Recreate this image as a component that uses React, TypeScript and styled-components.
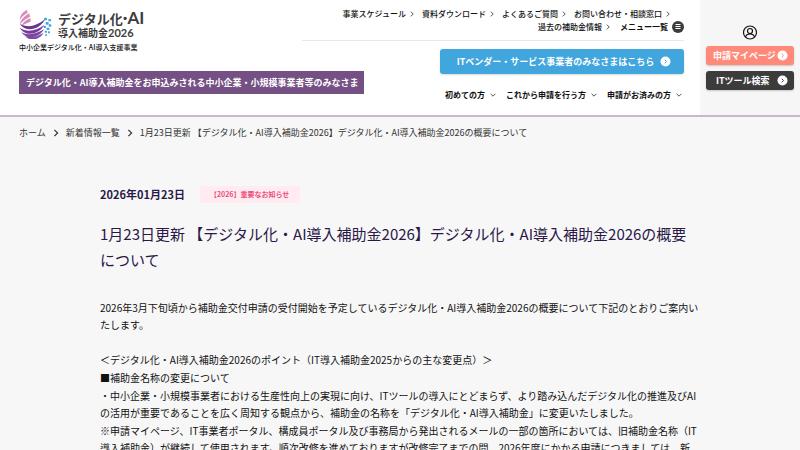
import React from "react";
import styled, { createGlobalStyle } from "styled-components";

const GlobalStyle = createGlobalStyle`
  *, *::before, *::after { box-sizing: border-box; }
  body {
    margin: 0;
    background: #f7f7f7;
    color: #111;
    font-family: "Noto Sans CJK JP", sans-serif;
    font-size: 10px;
    line-height: 17px;
  }
  a { color: inherit; text-decoration: none; }
  button { font: inherit; color: inherit; border: 0; background: none; padding: 0; cursor: pointer; }
  p, h1, ul, ol { margin: 0; padding: 0; }
  ul, ol { list-style: none; }
`;

const Header = styled.header`
  display: flex;
  background: #fff;
  border-bottom: 2px solid #c8b8cb;
`;

const Brand = styled.div`
  flex: none;
  padding: 8px 0 0 19px;
`;

const Logo = styled.a`
  display: flex;
  align-items: center;
  gap: 6px;
  height: 32px;
  color: #3c3c3c;
  font-weight: 700;
`;

const LogoMark = styled.svg`
  width: 33px;
  height: 30px;
`;

const LogoName = styled.span`
  display: block;
  font-size: 13px;
  line-height: 16px;
  white-space: nowrap;
`;

const LogoLatin = styled.span<{ $size: number }>`
  font-family: Lato, "Noto Sans CJK JP", sans-serif;
  font-size: ${(p) => p.$size}px;
  line-height: 10px;
`;

const LogoSub = styled.span`
  display: block;
  font-size: 10px;
  line-height: 11px;
  white-space: nowrap;
`;

const Tagline = styled.p`
  font-size: 7px;
  line-height: 12px;
  font-weight: 500;
  padding-top: 1px;
`;

const Audience = styled.p`
  margin-top: 18px;
  padding: 0 5px 0 7px;
  background: #755084;
  color: #fff;
  font-size: 9px;
  line-height: 23px;
  font-weight: 700;
  white-space: nowrap;
`;

const HeaderMain = styled.div`
  flex: 1;
  display: flex;
  flex-direction: column;
  align-items: flex-end;
  padding: 7px 16px 0 0;
  margin-left: -62px;
`;

const Utility = styled.nav`
  align-self: stretch;
  padding-bottom: 7px;
  border-bottom: 1px solid #e8e8e8;
  font-size: 8px;
  line-height: 13px;
  font-weight: 500;
`;

const UtilityRow = styled.ul<{ $end: number; $gap: number }>`
  display: flex;
  justify-content: flex-end;
  align-items: center;
  gap: ${(p) => p.$gap}px;
  height: 13px;
  padding-right: ${(p) => p.$end}px;
  white-space: nowrap;
`;

const ArrowLink = styled.a`
  display: flex;
  align-items: center;
  gap: 3px;
`;

const MenuButton = styled.button`
  display: flex;
  align-items: center;
  gap: 4px;
  font-weight: 700;
`;

const VendorLink = styled.a`
  display: flex;
  align-items: center;
  justify-content: center;
  gap: 6px;
  width: 244px;
  height: 25px;
  margin-top: 8px;
  padding-left: 4px;
  border-radius: 3px;
  background: #41a5de;
  box-shadow: 0 1px 2px rgba(0, 0, 0, 0.15);
  color: #fff;
  font-size: 9px;
  font-weight: 700;
`;

const GlobalNav = styled.ul`
  display: flex;
  gap: 10px;
  margin: 12px 2px 0 0;
  font-size: 8px;
  font-weight: 700;
  white-space: nowrap;
`;

const NavButton = styled.button`
  display: flex;
  align-items: center;
  gap: 5px;
`;

const Side = styled.div`
  flex: none;
  display: flex;
  flex-direction: column;
  align-items: stretch;
  gap: 6px;
  width: 100px;
  height: 115px;
  padding: 25px 6px 0;
  background: #f6f6f6;
`;

const UserIcon = styled.svg`
  align-self: center;
  width: 16px;
  height: 15px;
`;

const SideLink = styled.a<{ $color: string }>`
  display: flex;
  align-items: center;
  justify-content: space-between;
  height: 19px;
  padding: 0 6px 0 ${(p) => (p.$color === "#3c3c3c" ? 10 : 7)}px;
  border-radius: 3px;
  background: ${(p) => p.$color};
  box-shadow: 0 1px 2px rgba(0, 0, 0, 0.2);
  color: #fff;
  font-size: 9px;
  font-weight: 700;
  white-space: nowrap;
`;

const Breadcrumb = styled.ol`
  display: flex;
  align-items: center;
  gap: 6px;
  padding: 7px 19px;
  color: #333;
  font-size: 9px;
  white-space: nowrap;

  li { display: flex; align-items: center; gap: 6px; }
`;

const Article = styled.main`
  width: 75%;
  margin: 0 auto;
  padding-top: 38px;
`;

const Meta = styled.div`
  display: flex;
  align-items: center;
  gap: 15px;
  height: 17px;
  color: #2b1748;
`;

const PostDate = styled.time`
  font-size: 11px;
  font-weight: 700;
`;

const Tag = styled.span`
  padding: 0 11px 0 10px;
  background: #ffebf0;
  color: #ec4f80;
  font-size: 7px;
  line-height: 17px;
  font-weight: 700;
`;

const Title = styled.h1`
  margin-top: 18px;
  color: #2b1748;
  font-size: 15px;
  line-height: 26px;
  font-weight: 400;
`;

const Section = styled.section`
  display: flex;
  flex-direction: column;
  gap: 1px;
  margin-top: 18px;

  ${Title} + & { margin-top: 26px; }
`;

const Chevron = ({ size, width = 1, down = false }: { size: number; width?: number; down?: boolean }) => (
  <svg width={size} height={size} viewBox="0 0 10 10" fill="none" stroke="currentColor" strokeWidth={width} aria-hidden="true">
    <path d={down ? "M1 3l4 4 4-4" : "M3 1l4 4-4 4"} />
  </svg>
);

const CircleArrow = ({ color }: { color: string }) => (
  <svg width="11" height="11" viewBox="0 0 22 22" fill="none" aria-hidden="true">
    <circle cx="11" cy="11" r="10" fill="#fff" />
    <path d="M9.500 7.500l3.500 3.500-3.500 3.500" stroke={color} strokeWidth="2" />
  </svg>
);

const utilityLinks = ["事業スケジュール", "資料ダウンロード", "よくあるご質問", "お問い合わせ・相談窓口"];
const navItems = ["初めての方", "これから申請を行う方", "申請がお済みの方"];

const UtilityLink = ({ label }: { label: string }) => (
  <li>
    <ArrowLink href="#">
      {label}
      <Chevron size={6} width={1.2} />
    </ArrowLink>
  </li>
);

export default function App() {
  return (
    <>
      <GlobalStyle />
      <Header>
        <Brand>
          <Logo href="#">
            <LogoMark viewBox="0 0 99 90" fill="none" aria-hidden="true">
              <g fill="#d58bb8">
                <path d="M24 2C11 9 3 18 2 34c5-10 14-17 24-23z" />
                <path d="M31 13C15 22 6 30 3 46c8-11 19-17 30-23z" />
                <path d="M34 27C21 33 12 39 8 51c9-7 18-10 27-13z" />
              </g>
              <path d="M2 44c22 13 49 9 76-13-14 30-56 43-76 13z" fill="#6b3590" />
              <path d="M2 56c20 15 48 11 74-8-14 27-56 38-74 8z" fill="#75399a" />
              <path d="M7 69c19 12 43 7 68-8-14 26-51 34-68 8z" fill="#7e42a0" />
              <path d="M18 80c17 8 36 3 56-9-13 22-41 29-56 9z" fill="#7b4ba6" />
              <g fill="#3fa6dc">
                <rect x="75" y="26" width="9" height="8" rx="2" />
                <rect x="88" y="30" width="8" height="7" rx="2" />
                <rect x="80" y="39" width="9" height="8" rx="2" />
                <rect x="74" y="50" width="7" height="7" rx="2" />
                <rect x="89" y="46" width="8" height="7" rx="2" />
                <rect x="83" y="56" width="8" height="7" rx="2" />
                <rect x="77" y="65" width="7" height="6" rx="2" />
                <rect x="87" y="67" width="6" height="6" rx="2" />
                <rect x="78" y="76" width="6" height="5" rx="2" />
              </g>
            </LogoMark>
            <span>
              <LogoName>
                デジタル化<LogoLatin $size={17}>·AI</LogoLatin>
              </LogoName>
              <LogoSub>
                導入補助金<LogoLatin $size={11}>2026</LogoLatin>
              </LogoSub>
            </span>
          </Logo>
          <Tagline>中小企業デジタル化・AI導入支援事業</Tagline>
          <Audience>デジタル化・AI導入補助金をお申込みされる中小企業・小規模事業者等のみなさま</Audience>
        </Brand>

        <HeaderMain>
          <Utility aria-label="サイト案内">
            <UtilityRow $end={13} $gap={7}>
              {utilityLinks.map((label) => (
                <UtilityLink key={label} label={label} />
              ))}
            </UtilityRow>
            <UtilityRow $end={0} $gap={9}>
              <UtilityLink label="過去の補助金情報" />
              <li>
                <MenuButton type="button">
                  メニュー一覧
                  <svg width="12" height="12" viewBox="0 0 24 24" aria-hidden="true">
                    <circle cx="12" cy="12" r="12" fill="#3c3c3c" />
                    <path d="M7 7h10M7 11h10M7 15h10" stroke="#fff" strokeWidth="2" />
                  </svg>
                </MenuButton>
              </li>
            </UtilityRow>
          </Utility>
          <VendorLink href="#">
            ITベンダー・サービス事業者のみなさまはこちら
            <CircleArrow color="#41a5de" />
          </VendorLink>
          <nav aria-label="メイン">
            <GlobalNav>
              {navItems.map((label) => (
                <li key={label}>
                  <NavButton type="button">
                    {label}
                    <Chevron size={6} width={1.2} down />
                  </NavButton>
                </li>
              ))}
            </GlobalNav>
          </nav>
        </HeaderMain>

        <Side>
          <UserIcon viewBox="0 0 30 30" fill="none" stroke="#111" strokeWidth="2.400" aria-hidden="true">
            <circle cx="15" cy="15" r="13" />
            <circle cx="15" cy="12" r="5" />
            <path d="M6 24c2-8 16-8 18 0" />
          </UserIcon>
          <SideLink href="#" $color="#ff8a7a">
            申請マイページ
            <CircleArrow color="#ff8a7a" />
          </SideLink>
          <SideLink href="#" $color="#3c3c3c">
            ITツール検索
            <CircleArrow color="#3c3c3c" />
          </SideLink>
        </Side>
      </Header>

      <nav aria-label="パンくずリスト">
        <Breadcrumb>
          <li>
            <a href="#">ホーム</a>
            <Chevron size={8} width={1.5} />
          </li>
          <li>
            <a href="#">新着情報一覧</a>
            <Chevron size={8} width={1.5} />
          </li>
          <li>1月23日更新 【デジタル化・AI導入補助金2026】デジタル化・AI導入補助金2026の概要について</li>
        </Breadcrumb>
      </nav>

      <Article>
        <Meta>
          <PostDate dateTime="2026-01-23">2026年01月23日</PostDate>
          <Tag>【2026】重要なお知らせ</Tag>
        </Meta>
        <Title>1月23日更新 【デジタル化・AI導入補助金2026】デジタル化・AI導入補助金2026の概要について</Title>
        <Section>
          <p>
            2026年3月下旬頃から補助金交付申請の受付開始を予定しているデジタル化・AI導入補助金2026の概要について下記のとおりご案内いたします。
          </p>
        </Section>
        <Section>
          <p>＜デジタル化・AI導入補助金2026のポイント（IT導入補助金2025からの主な変更点）＞</p>
          <p>■補助金名称の変更について</p>
          <p>
            ・中小企業・小規模事業者における生産性向上の実現に向け、ITツールの導入にとどまらず、より踏み込んだデジタル化の推進及びAIの活用が重要であることを広く周知する観点から、補助金の名称を「デジタル化・AI導入補助金」に変更いたしました。
          </p>
          <p>
            ※申請マイページ、IT事業者ポータル、構成員ポータル及び事務局から発出されるメールの一部の箇所においては、旧補助金名称（IT導入補助金）が継続して使用されます。順次改修を進めておりますが改修完了までの間、2026年度にかかる申請につきましては、新
          </p>
        </Section>
      </Article>
    </>
  );
}
